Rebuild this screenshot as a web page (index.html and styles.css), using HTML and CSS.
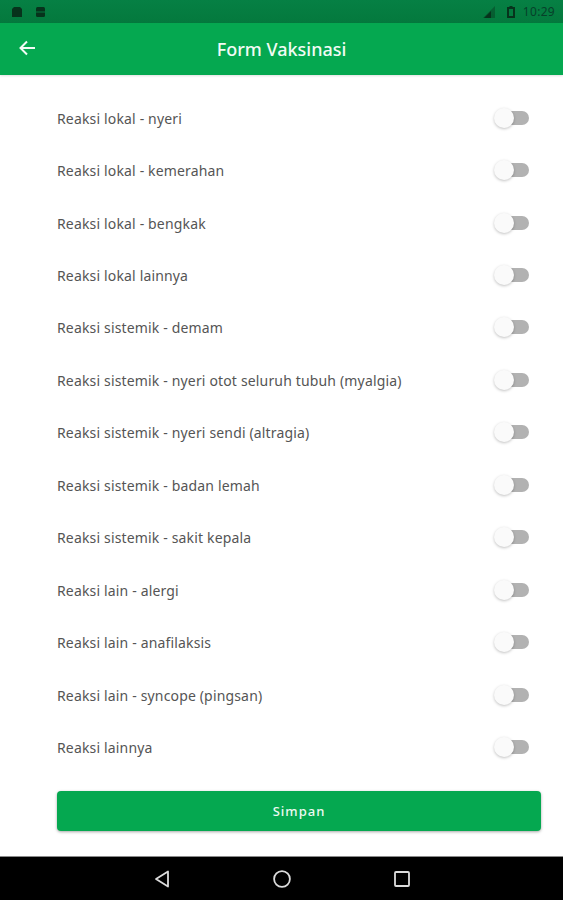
FILE: index.html
```html
<!DOCTYPE html>
<html lang="en">
<head>
    <meta charset="UTF-8">
    <meta name="viewport" content="width=device-width, initial-scale=1.0">
    <title>Form Vaksinasi</title>
    <link rel="stylesheet" href="styles.css">
</head>
<body>
    <div class="status-bar">
        <div class="status-left">
            <svg width="12" height="12" viewBox="0 0 12 12"><path d="M3 1h6l2 2v8H1V3z" fill="#07331c"/></svg>
            <svg width="11" height="10" viewBox="0 0 11 10"><rect x="1" y="0" width="9" height="10" rx="1.5" fill="#07331c"/><rect x="1" y="4.5" width="9" height="1" fill="#047a3e"/></svg>
        </div>
        <div class="status-right">
            <svg class="signal" width="14" height="12" viewBox="0 0 14 12"><path d="M13 0v12H1z" fill="#07331c" opacity="0.4"/><path d="M9 5v7H2z" fill="#07331c"/></svg>
            <svg class="battery" width="8" height="12" viewBox="0 0 8 12"><path d="M2.500 0h3v1H8v11H0V1h2.500z" fill="#07331c"/><rect x="2" y="3" width="4" height="7" fill="#047a3e"/></svg>
            <span class="clock">10:29</span>
        </div>
    </div>

    <header class="toolbar">
        <svg class="back" width="18" height="18" viewBox="0 0 18 18"><path d="M17 9H3M9 2.500L2.500 9 9 15.500" fill="none" stroke="#f2fbf5" stroke-width="2"/></svg>
        <h1>Form Vaksinasi</h1>
    </header>

    <main class="form">
        <ul class="reaksi-list">
            <li><span>Reaksi lokal - nyeri</span><i class="switch"></i></li>
            <li><span>Reaksi lokal - kemerahan</span><i class="switch"></i></li>
            <li><span>Reaksi lokal - bengkak</span><i class="switch"></i></li>
            <li><span>Reaksi lokal lainnya</span><i class="switch"></i></li>
            <li><span>Reaksi sistemik - demam</span><i class="switch"></i></li>
            <li><span>Reaksi sistemik - nyeri otot seluruh tubuh (myalgia)</span><i class="switch"></i></li>
            <li><span>Reaksi sistemik - nyeri sendi (altragia)</span><i class="switch"></i></li>
            <li><span>Reaksi sistemik - badan lemah</span><i class="switch"></i></li>
            <li><span>Reaksi sistemik - sakit kepala</span><i class="switch"></i></li>
            <li><span>Reaksi lain - alergi</span><i class="switch"></i></li>
            <li><span>Reaksi lain - anafilaksis</span><i class="switch"></i></li>
            <li><span>Reaksi lain - syncope (pingsan)</span><i class="switch"></i></li>
            <li><span>Reaksi lainnya</span><i class="switch"></i></li>
        </ul>
        <button class="simpan">Simpan</button>
    </main>

    <nav class="nav-bar">
        <svg width="16" height="18" viewBox="0 0 16 18"><path d="M14 1.500v15L2 9z" fill="none" stroke="#dcdcdc" stroke-width="1.800" stroke-linejoin="round"/></svg>
        <svg width="18" height="18" viewBox="0 0 18 18"><circle cx="9" cy="9" r="7.900" fill="none" stroke="#dcdcdc" stroke-width="1.800"/></svg>
        <svg width="16" height="16" viewBox="0 0 16 16"><rect x="1" y="1" width="14" height="14" rx="1" fill="none" stroke="#dcdcdc" stroke-width="1.800"/></svg>
    </nav>
</body>
</html>
```

FILE: styles.css
```css
body {
    margin: 0;
    height: 900px;
    display: flex;
    flex-direction: column;
    overflow: hidden;
    background: #fff;
    font-family: "Noto Sans", sans-serif;
}
.status-bar {
    height: 23px;
    flex: none;
    display: flex;
    justify-content: space-between;
    align-items: center;
    padding: 0 8px 0 11px;
    background: linear-gradient(#068044, #04793d);
}
.status-left,
.status-right {
    display: flex;
    align-items: center;
}
.status-left {
    gap: 12px;
}
.signal {
    margin-right: 11px;
}
.battery {
    margin-right: 8px;
}
.clock {
    font-size: 12px;
    color: #07402a;
    letter-spacing: 0.3px;
}
.toolbar {
    height: 52px;
    flex: none;
    position: relative;
    display: flex;
    align-items: center;
    justify-content: center;
    background: #05a850;
    box-shadow: 0 1px 2px rgba(0, 0, 0, 0.12);
}
.toolbar h1 {
    margin: 0;
    font-size: 18px;
    font-weight: 500;
    color: #f2fbf5;
}
.back {
    position: absolute;
    left: 18px;
    top: 16px;
}
.form {
    flex: 1;
    padding: 17px 22px 0 57px;
}
.reaksi-list {
    list-style: none;
    margin: 0;
    padding: 0;
}
.reaksi-list li {
    height: 52.45px;
    display: flex;
    align-items: center;
    justify-content: space-between;
    font-size: 14px;
    letter-spacing: 0.16px;
    color: #555;
}
.switch {
    position: relative;
    width: 30px;
    height: 14px;
    margin: 0 12.5px 1px 0;
    border-radius: 7px;
    background: #b2b2b2;
}
.switch::after {
    content: "";
    position: absolute;
    left: -5px;
    top: -3px;
    width: 20px;
    height: 20px;
    border-radius: 50%;
    background: #fafafa;
    box-shadow: 0 1px 3px rgba(0, 0, 0, 0.25);
}
.simpan {
    display: block;
    width: 484px;
    height: 40px;
    margin-top: 17px;
    border: none;
    border-radius: 4px;
    background: #05a850;
    color: #eefaf2;
    font-family: inherit;
    font-size: 13px;
    font-weight: 500;
    letter-spacing: 1px;
    box-shadow: 0 1px 3px rgba(0, 0, 0, 0.35);
}
.nav-bar {
    height: 44px;
    box-sizing: border-box;
    flex: none;
    display: flex;
    align-items: center;
    justify-content: center;
    gap: 103px;
    border-top: 1px solid #8a8a8a;
    background: #000;
}
```
